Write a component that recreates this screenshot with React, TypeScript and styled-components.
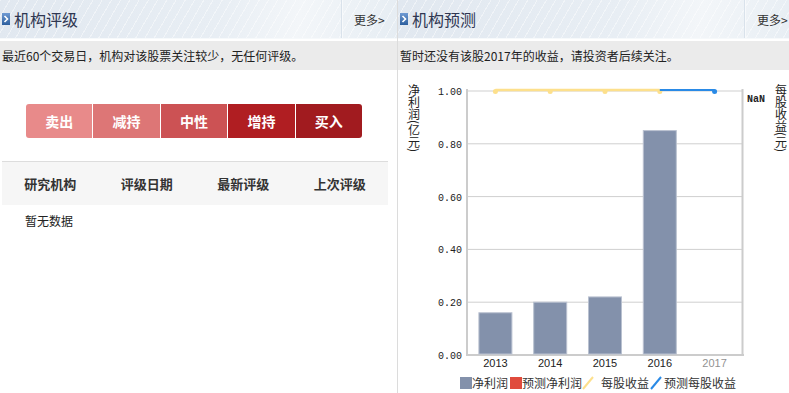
import styled, { createGlobalStyle } from 'styled-components';

const GlobalStyle = createGlobalStyle`
  html, body {
    margin: 0;
    padding: 0;
    background: #fff;
  }
  body {
    width: 789px;
    height: 393px;
    overflow: hidden;
    font-family: "Noto Sans CJK SC", "Liberation Sans", sans-serif;
    color: #333;
  }
`;

const ratings = [
  { label: '卖出', color: '#e88a8a' },
  { label: '减持', color: '#dd7676' },
  { label: '中性', color: '#cc5254' },
  { label: '增持', color: '#b01e22' },
  { label: '买入', color: '#a11b1f' },
];

const columns = ['研究机构', '评级日期', '最新评级', '上次评级'];

// chart data (亿元)
const profits = [0.16, 0.2, 0.22, 0.85];
const years = ['2013', '2014', '2015', '2016', '2017'];
const ticks = [1, 0.8, 0.6, 0.4, 0.2, 0];

const PLOT_LEFT = 468;
const PLOT_RIGHT = 742;
const PLOT_TOP = 92;
const PLOT_BOTTOM = 356;
const step = (PLOT_RIGHT - PLOT_LEFT) / years.length;
const yOf = (v: number) => PLOT_BOTTOM - v * (PLOT_BOTTOM - PLOT_TOP);
const xOf = (i: number) => PLOT_LEFT + step * i + step / 2;

const PanelIcon = () => (
  <svg width="8" height="12" viewBox="0 0 8 12">
    <defs>
      <linearGradient id="ig" x1="0" y1="0" x2="0" y2="1">
        <stop offset="0" stopColor="#6f9ad3" />
        <stop offset="1" stopColor="#2d5f9e" />
      </linearGradient>
    </defs>
    <rect width="8" height="12" fill="url(#ig)" />
    <path d="M2.5 3 L5.5 6 L2.5 9" stroke="#fff" strokeWidth="1.6" fill="none" />
  </svg>
);

const Forecast = () => (
  <ChartSvg width={391} height={322} viewBox="398 71 391 322">
    {ticks.map((t) => (
      <g key={t}>
        <line x1={PLOT_LEFT} x2={PLOT_RIGHT} y1={yOf(t)} y2={yOf(t)} stroke="#cfcfcf" />
        <text x={462} y={yOf(t) + 4} textAnchor="end" fontFamily="Liberation Mono, monospace" fontSize="10" fill="#222">
          {t.toFixed(2)}
        </text>
      </g>
    ))}
    <line x1={467} x2={467} y1={90} y2={357} stroke="#cccccc" strokeWidth="2" />
    <line x1={742.5} x2={742.5} y1={90} y2={357} stroke="#cccccc" strokeWidth="2" />
    <line x1={466} x2={744} y1={356} y2={356} stroke="#cccccc" strokeWidth="2" />

    {profits.map((p, i) => (
      <rect
        key={i}
        x={xOf(i) - 16.5}
        y={yOf(p)}
        width={33}
        height={PLOT_BOTTOM - yOf(p) - 1}
        fill="#8391ab"
        stroke="#b9c1d0"
        strokeWidth="1"
      />
    ))}

    {years.map((y, i) => (
      <text
        key={y}
        x={xOf(i)}
        y={368}
        textAnchor="middle"
        fontFamily="Liberation Sans, sans-serif"
        fontSize="11"
        fill="#222"
        opacity={i === 4 ? 0.5 : 1}
      >
        {y}
      </text>
    ))}

    <polyline
      points={[0, 1, 2, 3].map((i) => `${xOf(i)},91`).join(' ')}
      fill="none"
      stroke="#fde08c"
      strokeWidth="2.5"
    />
    {[0, 1, 2, 3].map((i) => (
      <circle key={i} cx={xOf(i)} cy={92.5} r={2.5} fill="#fde08c" />
    ))}
    <line x1={xOf(3)} x2={xOf(4)} y1={91} y2={91} stroke="#2a8ae6" strokeWidth="2" />
    <circle cx={xOf(4)} cy={92.5} r={2.5} fill="#2a8ae6" />

    <text x={747} y={103} fontFamily="Liberation Mono, monospace" fontSize="10" fontWeight="bold" fill="#222">
      NaN
    </text>

    <AxisTitle x={414} y={85}>净利润(亿元)</AxisTitle>
    <AxisTitle x={781} y={85}>每股收益(元)</AxisTitle>

    <g fontSize="12" fill="#333" fontFamily="Noto Sans CJK SC, sans-serif">
      <rect x={460} y={378} width={12} height={12} fill="#8391ab" />
      <text x={472} y={389}>净利润</text>
      <rect x={510} y={378} width={12} height={12} fill="#e04b3d" />
      <text x={522} y={389}>预测净利润</text>
      <line x1={583} x2={593} y1={390} y2={378} stroke="#fde08c" strokeWidth="2" />
      <text x={601} y={389}>每股收益</text>
      <line x1={651} x2={661} y1={390} y2={378} stroke="#2a8ae6" strokeWidth="2" />
      <text x={664} y={389}>预测每股收益</text>
    </g>
  </ChartSvg>
);

export default function App() {
  return (
    <>
      <GlobalStyle />
      <Page>
        <Panel $width={397} $divider>
          <Header>
            <PanelIcon />
            <Title>机构评级</Title>
            <More>更多&gt;</More>
          </Header>
          <SubBar>最近60个交易日，机构对该股票关注较少，无任何评级。</SubBar>
          <RatingBar>
            {ratings.map((r) => (
              <RatingCell key={r.label} $color={r.color}>
                {r.label}
              </RatingCell>
            ))}
          </RatingBar>
          <Table>
            <HeadRow>
              {columns.map((c) => (
                <HeadCell key={c}>{c}</HeadCell>
              ))}
            </HeadRow>
            <EmptyRow>暂无数据</EmptyRow>
          </Table>
        </Panel>
        <Panel $width={402}>
          <Header>
            <PanelIcon />
            <Title>机构预测</Title>
            <More>更多&gt;</More>
          </Header>
          <SubBar>暂时还没有该股2017年的收益，请投资者后续关注。</SubBar>
          <Forecast />
        </Panel>
      </Page>
    </>
  );
}

const Page = styled.div`
  display: flex;
  width: 789px;
  height: 393px;
  overflow: hidden;
`;

const Panel = styled.div<{ $width: number; $divider?: boolean }>`
  width: ${(p) => p.$width}px;
  flex-shrink: 0;
  height: 393px;
  border-right: ${(p) => (p.$divider ? '1px solid #dcdcdc' : 'none')};
  display: flex;
  flex-direction: column;
`;

const Header = styled.div`
  height: 39px;
  margin-bottom: 2px;
  display: flex;
  align-items: center;
  padding-left: 2px;
  background:
    repeating-linear-gradient(120deg, rgba(255, 255, 255, 0.45) 0 1px, transparent 1px 8px),
    linear-gradient(100deg, #e1e8f0 0%, #e8eef4 55%, #f3f6f9 75%, #e6edf3 100%);
  border-bottom: 1px solid #f6f9fb;
  box-sizing: border-box;
`;

const Title = styled.span`
  margin-left: 4px;
  font-size: 16px;
  color: #2f3752;
  letter-spacing: 0;
`;

const More = styled.div`
  margin-left: auto;
  width: 56px;
  height: 100%;
  box-sizing: border-box;
  border-left: 1px solid #d9e2eb;
  box-shadow: inset 1px 0 0 #f7f9fb;
  padding: 11px 0 0 12px;
  font-size: 12px;
  color: #333;
`;

const SubBar = styled.div`
  height: 29px;
  line-height: 29px;
  background: #ebebeb;
  font-size: 12px;
  padding-left: 2px;
  color: #222;
  white-space: nowrap;
`;

const RatingBar = styled.div`
  display: flex;
  gap: 1px;
  margin: 34px 0 0 26px;
  width: 336px;
  height: 34px;
  border-radius: 3px;
  overflow: hidden;
`;

const RatingCell = styled.div<{ $color: string }>`
  flex: 1;
  background: ${(p) => p.$color};
  color: #fff;
  font-size: 14px;
  font-weight: bold;
  display: flex;
  align-items: center;
  justify-content: center;
`;

const Table = styled.div`
  margin: 23px 0 0 2px;
  width: 386px;
`;

const HeadRow = styled.div`
  display: grid;
  grid-template-columns: repeat(4, 1fr);
  height: 43px;
  align-items: center;
  background: #f6f6f6;
  border-top: 1px solid #dddddd;
`;

const HeadCell = styled.div`
  text-align: center;
  font-size: 13px;
  font-weight: bold;
  color: #333;
`;

const EmptyRow = styled.div`
  padding: 7px 0 0 23px;
  font-size: 12px;
  color: #222;
`;

const ChartSvg = styled.svg`
  display: block;
`;

const AxisTitle = styled.text`
  writing-mode: vertical-rl;
  font-size: 12px;
  fill: #222;
  font-family: "Noto Sans CJK SC", sans-serif;
`;
